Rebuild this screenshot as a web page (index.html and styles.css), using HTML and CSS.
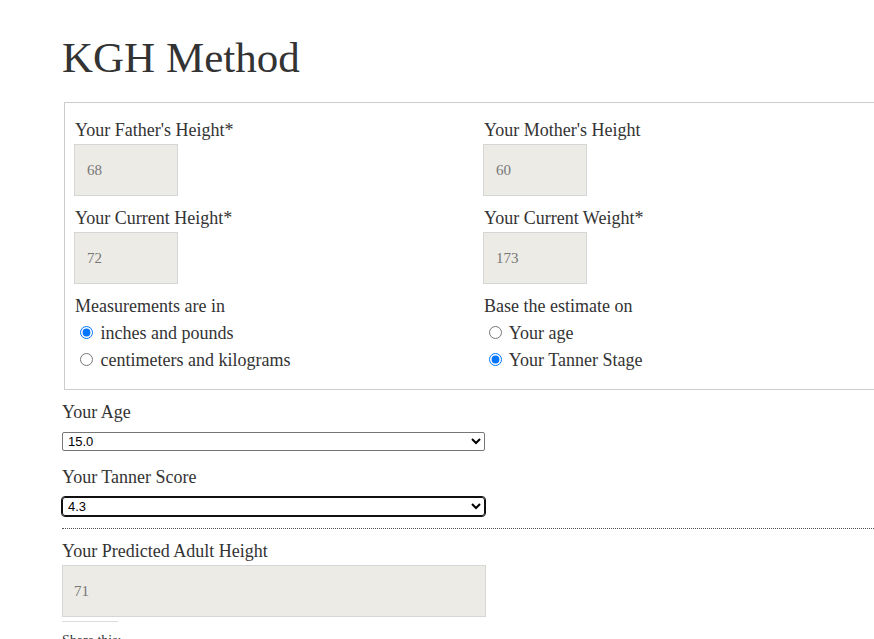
FILE: index.html
```html
<!DOCTYPE html>
<html lang="en">
<head>
<meta charset="utf-8">
<title>KGH Method</title>
<link rel="stylesheet" href="styles.css">
</head>
<body>
<main class="page">
  <h1 class="title">KGH Method</h1>
  <form class="calc">
    <fieldset class="box">
      <div class="grid">
        <div class="field">
          <label class="lbl">Your Father's Height*</label>
          <input class="num" type="text" value="68">
        </div>
        <div class="field">
          <label class="lbl">Your Mother's Height</label>
          <input class="num" type="text" value="60">
        </div>
        <div class="field">
          <label class="lbl">Your Current Height*</label>
          <input class="num" type="text" value="72">
        </div>
        <div class="field">
          <label class="lbl">Your Current Weight*</label>
          <input class="num" type="text" value="173">
        </div>
        <div class="field">
          <div class="lbl">Measurements are in</div>
          <label class="opt"><input type="radio" name="units" checked> inches and pounds</label>
          <label class="opt"><input type="radio" name="units"> centimeters and kilograms</label>
        </div>
        <div class="field">
          <div class="lbl">Base the estimate on</div>
          <label class="opt"><input type="radio" name="basis"> Your age</label>
          <label class="opt"><input type="radio" name="basis" checked> Your Tanner Stage</label>
        </div>
      </div>
    </fieldset>

    <label class="lbl lbl-low">Your Age</label>
    <select class="sel">
      <option>15.0</option>
    </select>

    <label class="lbl lbl-low lbl-gap">Your Tanner Score</label>
    <select class="sel sel-focus">
      <option>4.3</option>
    </select>

    <hr class="dots">

    <label class="lbl">Your Predicted Adult Height</label>
    <input class="num wide" type="text" value="71">
  </form>
  <div class="share">
    <div class="share-rule"></div>
    <div class="share-title">Share this:</div>
  </div>
</main>
</body>
</html>
```

FILE: styles.css
```css
html, body {
  margin: 0;
  padding: 0;
  background: #fff;
  overflow: hidden;
}

body {
  font-family: "Liberation Serif", "Times New Roman", serif;
  color: #333;
}

.page {
  padding: 32px 0 0 62px;
  width: 840px;
}

.title {
  margin: 0 0 18px 0;
  font-size: 43px;
  line-height: 52px;
  font-weight: normal;
  color: #333;
}

.calc {
  display: block;
}

.box {
  margin: 0 2px 8px 2px;
  padding: 14px 10px 15px 9px;
  border: 1px solid #ccc;
  width: 850px;
  box-sizing: border-box;
}

.grid {
  display: grid;
  grid-template-columns: 409px 1fr;
  row-gap: 9px;
}

.field {
  display: flex;
  flex-direction: column;
  align-items: flex-start;
}

.lbl {
  display: block;
  font-size: 18px;
  line-height: 27px;
  color: #333;
}

.lbl-low {
  padding-top: 2px;
  line-height: 25px;
}

.field .lbl {
  padding-left: 1px;
}

.lbl-gap {
  margin-top: 12px;
}

.opt {
  display: block;
  font-size: 18px;
  line-height: 27px;
  color: #333;
}

.opt input {
  margin: 3px 3px 0 6px;
}

.num {
  display: block;
  box-sizing: border-box;
  width: 104px;
  height: 52px;
  margin: 0;
  padding: 0 12px;
  background: #edebe6;
  border: 1px solid #d6d6d6;
  border-radius: 0;
  font-family: "Liberation Serif", "Times New Roman", serif;
  font-size: 15px;
  color: #777;
  outline: none;
}

.wide {
  width: 424px;
  padding: 0 11px;
}

.sel {
  display: block;
  box-sizing: border-box;
  width: 423px;
  height: 19px;
  margin: 7px 0 0 0;
  padding: 0 0 0 1px;
  font-family: "Liberation Sans", Arial, sans-serif;
  font-size: 13px;
  color: #000;
  background: #fff;
  border: 1px solid #767676;
  border-radius: 2px;
}

.sel-focus {
  border: 1px solid #101010;
  outline: 1px solid #101010;
  border-radius: 3px;
}

.dots {
  margin: 12px 0 9px 0;
  border: 0;
  border-top: 1px dotted #555;
  height: 0;
  width: 820px;
}

.share {
  margin-top: 4px;
}

.share-rule {
  width: 56px;
  height: 0;
  border-top: 1px solid #ddd;
}

.share-title {
  margin-top: 10px;
  font-size: 14px;
  line-height: 18px;
  color: #333;
}
```
